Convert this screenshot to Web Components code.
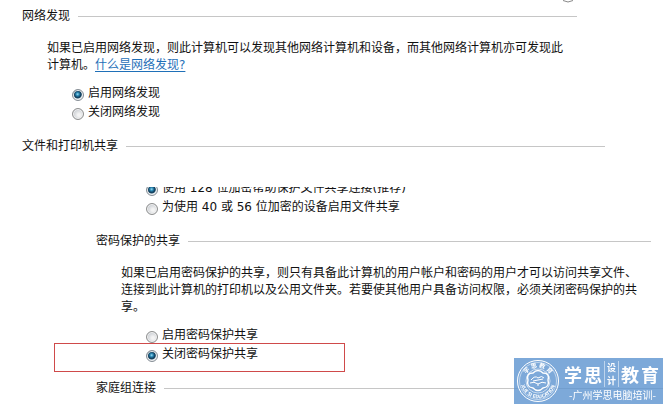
<!DOCTYPE html>
<html lang="zh-CN">
<head>
<meta charset="utf-8">
<title>高级共享设置</title>
<style>
  body {
    margin: 0;
    background: #fff;
    color: #111;
    font: 12px/17px "DejaVu Sans", "Noto Sans CJK SC", sans-serif;
  }
</style>
</head>
<body>
<sharing-panel>
  <sharing-section heading="网络发现">
    <span slot="text">如果已启用网络发现，则此计算机可以发现其他网络计算机和设备，而其他网络计算机亦可发现此计算机。<help-link href="#discovery">什么是网络发现?</help-link></span>
    <sharing-option group="discovery" checked>启用网络发现</sharing-option>
    <sharing-option group="discovery">关闭网络发现</sharing-option>
  </sharing-section>
  <sharing-section class="wide" heading="文件和打印机共享"></sharing-section>
</sharing-panel>
<sharing-panel class="scrolled">
  <sharing-section>
    <sharing-option group="encryption" checked>使用 128 位加密帮助保护文件共享连接(推荐)</sharing-option>
    <sharing-option group="encryption">为使用 40 或 56 位加密的设备启用文件共享</sharing-option>
  </sharing-section>
  <sharing-section heading="密码保护的共享">
    <span slot="text">如果已启用密码保护的共享，则只有具备此计算机的用户帐户和密码的用户才可以访问共享文件、连接到此计算机的打印机以及公用文件夹。若要使其他用户具备访问权限，必须关闭密码保护的共享。</span>
    <sharing-option group="password">启用密码保护共享</sharing-option>
    <sharing-option group="password" checked marked>关闭密码保护共享</sharing-option>
  </sharing-section>
  <sharing-section class="full" heading="家庭组连接"></sharing-section>
</sharing-panel>
<school-badge></school-badge>

<script>
class SharingPanel extends HTMLElement {
  constructor() {
    super();
    this.attachShadow({ mode: "open" });
    this.shadowRoot.innerHTML = `
      <style>
        :host {
          display: block;
          position: relative;
          box-sizing: border-box;
          overflow: hidden;
          padding: 8px 86px 32px 22px;
        }
        :host(.scrolled) {
          padding: 0 12px 0 96px;
        }
        .content {
          display: flex;
          flex-direction: column;
          gap: 16px;
        }
        :host(.scrolled) .content {
          margin-top: -8px;
        }
        svg {
          position: absolute;
          top: 0;
          right: 88px;
        }
        :host(.scrolled) svg {
          display: none;
        }
        ::slotted(.wide) {
          margin-right: -28px;
        }
        ::slotted(.full) {
          margin-right: -12px;
        }
      </style>
      <svg width="14" height="4" viewBox="0 0 14 4" aria-hidden="true">
        <path d="M2 0.5Q7 3.5 12 0.5" fill="none" stroke="#888" />
      </svg>
      <div class="content"><slot></slot></div>
    `;
  }
}

class SharingSection extends HTMLElement {
  constructor() {
    super();
    this.attachShadow({ mode: "open" });
    const heading = this.getAttribute("heading");
    const hasText = this.querySelector("[slot=text]");
    this.shadowRoot.innerHTML = `
      <style>
        :host {
          display: block;
        }
        header {
          display: flex;
          align-items: center;
          gap: 8px;
        }
        h2 {
          margin: 0;
          font: inherit;
        }
        .rule {
          flex: 1;
          height: 1px;
          background: #c6c6c6;
        }
        p {
          margin: 0;
          padding: 15px 12px 10px 25px;
        }
        .options {
          padding-left: 50px;
        }
      </style>
      ${heading ? `<header><h2>${heading}</h2><div class="rule"></div></header>` : ""}
      ${hasText ? `<p><slot name="text"></slot></p>` : ""}
      <div class="options"><slot></slot></div>
    `;
  }
}

class SharingOption extends HTMLElement {
  constructor() {
    super();
    this.attachShadow({ mode: "open" });
    this.shadowRoot.innerHTML = `
      <style>
        :host {
          display: block;
          position: relative;
        }
        label {
          display: flex;
          align-items: flex-end;
          gap: 4px;
          line-height: 19px;
        }
        input {
          appearance: none;
          box-sizing: border-box;
          flex: none;
          width: 12px;
          height: 12px;
          margin: 0 0 2px;
          border: 1px solid #8e8f8f;
          border-radius: 50%;
          background: radial-gradient(circle at 60% 60%, #f4f4f4 15%, #c9cdd2 70%);
          box-shadow: inset 0 0 0 1px #f2f2f2;
        }
        input:checked {
          border-color: #858d94;
          background: radial-gradient(circle at 46% 42%, #9fdcf2 0, #2b8ab5 20%, #123f5e 40%, #1d4a66 48%, #dde5ea 60%);
        }
        .mark {
          position: absolute;
          top: -2px;
          left: -92px;
          box-sizing: border-box;
          width: 291px;
          height: 29px;
          border: 1px solid #cf4a4a;
          pointer-events: none;
        }
      </style>
      <label>
        <input type="radio" name="${this.getAttribute("group")}" ${this.hasAttribute("checked") ? "checked" : ""}>
        <span><slot></slot></span>
      </label>
      ${this.hasAttribute("marked") ? `<div class="mark"></div>` : ""}
    `;
  }
}

class HelpLink extends HTMLElement {
  constructor() {
    super();
    this.attachShadow({ mode: "open" });
    // no whitespace round the link, it sits inside running text
    this.shadowRoot.innerHTML = `<style>
        :host {
          display: inline;
        }
        a {
          color: #1f70b8;
          text-underline-offset: 2px;
        }
      </style><a href="${this.getAttribute("href")}"><slot></slot></a>`;
  }
}

class SchoolBadge extends HTMLElement {
  constructor() {
    super();
    this.attachShadow({ mode: "open" });
    this.shadowRoot.innerHTML = `
      <style>
        :host {
          position: fixed;
          right: 0;
          bottom: 0;
          display: flex;
          align-items: center;
          gap: 4px;
          box-sizing: border-box;
          width: 149px;
          height: 46px;
          padding-left: 2px;
          background: rgba(92, 148, 208, 0.8);
          color: #fff;
          font-family: "Noto Sans CJK SC", sans-serif;
        }
        svg {
          flex: none;
        }
        .words {
          display: flex;
          flex-direction: column;
        }
        .name {
          display: flex;
          align-items: center;
          gap: 2px;
          font-size: 18px;
          line-height: 28px;
          font-weight: 700;
        }
        .small {
          display: flex;
          flex-direction: column;
          padding: 0 2px;
          border: solid rgba(255, 255, 255, 0.5);
          border-width: 0 1px;
          font-size: 9px;
          line-height: 13px;
        }
        .city {
          padding-left: 5px;
          font-size: 10px;
          line-height: 14px;
          white-space: nowrap;
        }
      </style>
      <svg width="44" height="44" viewBox="0 0 44 44" fill="none" stroke="#fff" aria-hidden="true">
        <circle cx="22" cy="22" r="20.5" />
        <circle cx="22" cy="22" r="18.5" stroke-width="0.5" />
        <circle cx="22" cy="22" r="12" stroke-width="0.6" />
        <path id="rim" d="M8.5 22A13.5 13.5 0 0 1 35.5 22" stroke="none" />
        <path id="base" d="M4.5 22A17.5 17.5 0 0 0 39.5 22" stroke="none" />
        <g fill="#fff" stroke="none">
          <text font-size="6" font-weight="700" text-anchor="middle"><textPath href="#rim" startOffset="50%">学 思 教 育</textPath></text>
          <text font-size="5" font-weight="700" text-anchor="middle"><textPath href="#base" startOffset="50%">XUE SI EDUCATION</textPath></text>
        </g>
        <path d="M17 14Q22 9 27 14Q34 14 32 21Q34 28 27 29Q22 34 17 29Q10 28 12 21Q10 14 17 14Z" stroke-width="1.4" />
        <path d="M14 24Q18 22 22 25Q26 22 30 24M15 21Q19 16 22 19Q26 16 28 19M17 22L27 20M22 25V27" stroke-width="1" />
      </svg>
      <div class="words">
        <div class="name">
          <span>学</span><span>思</span>
          <span class="small"><span>设</span><span>计</span></span>
          <span>教</span><span>育</span>
        </div>
        <div class="city">-广州学思电脑培训-</div>
      </div>
    `;
  }
}

customElements.define("sharing-panel", SharingPanel);
customElements.define("sharing-section", SharingSection);
customElements.define("sharing-option", SharingOption);
customElements.define("help-link", HelpLink);
customElements.define("school-badge", SchoolBadge);
</script>
</body>
</html>
